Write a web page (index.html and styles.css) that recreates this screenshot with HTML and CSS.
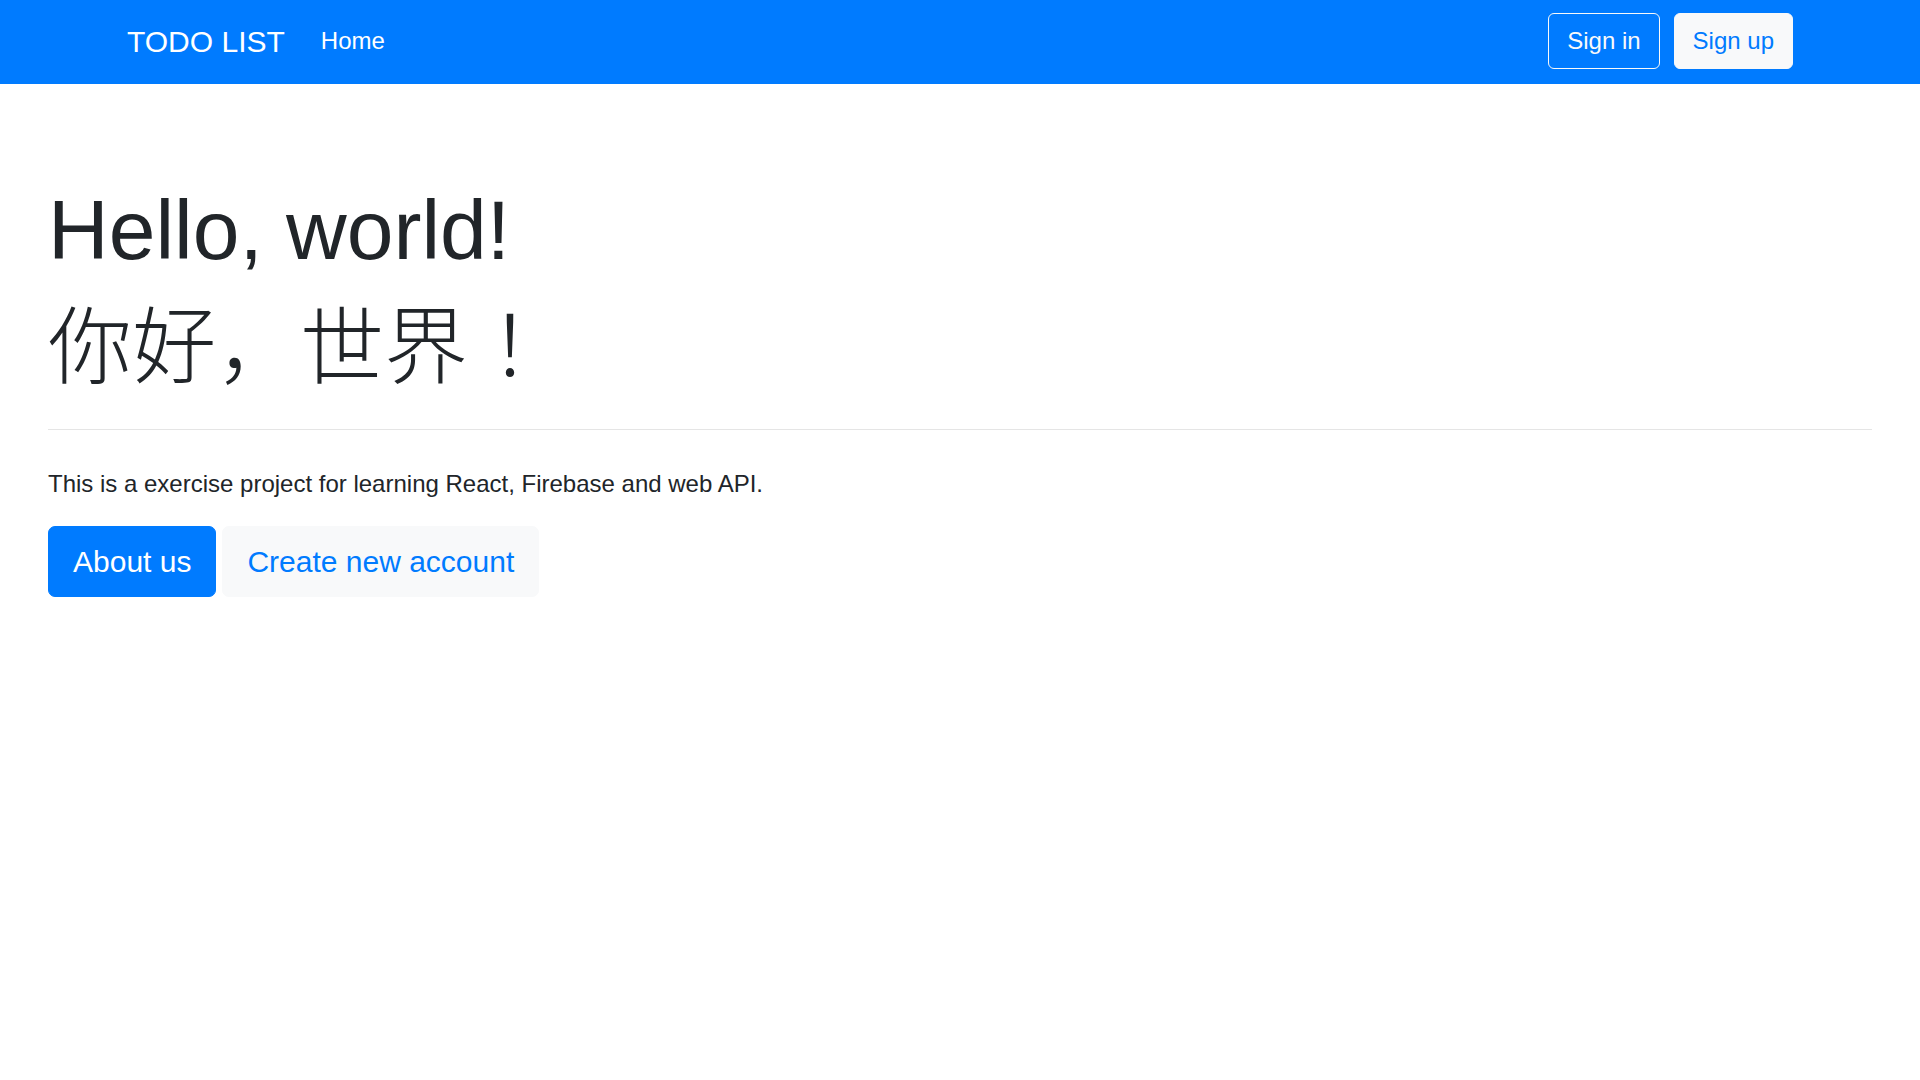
FILE: index.html
```html
<!DOCTYPE html>
<html lang="en">
<head>
<meta charset="utf-8">
<title>TODO LIST</title>
<link rel="stylesheet" href="styles.css">
</head>
<body>
<nav class="navbar">
  <div class="container">
    <a class="brand" href="#">TODO LIST</a>
    <a class="nav-link" href="#">Home</a>
    <div class="nav-actions">
      <button class="btn btn-outline-light">Sign in</button>
      <button class="btn btn-light">Sign up</button>
    </div>
  </div>
</nav>
<main class="jumbotron">
  <h1 class="display">Hello, world!<span class="display-cjk">你好，世界！</span></h1>
  <hr class="divider">
  <p class="intro">This is a exercise project for learning React, Firebase and web API.</p>
  <div class="actions">
    <a class="btn btn-lg btn-primary" href="#">About us</a>
    <a class="btn btn-lg btn-light" href="#">Create new account</a>
  </div>
</main>
</body>
</html>
```

FILE: styles.css
```css
* { box-sizing: border-box; }
html, body { margin: 0; padding: 0; }
body {
  font-family: "Liberation Sans", Arial, "Noto Sans CJK JP", sans-serif;
  font-size: 24px;
  line-height: 1.5;
  color: #212529;
  background: #fff;
}
.navbar {
  background: #007bff;
  padding: 11px 0 13px;
}
.container {
  width: 1666px;
  margin: 0 auto;
  display: flex;
  align-items: center;
}
.brand {
  color: #fff;
  text-decoration: none;
  font-size: 30px;
  line-height: 45px;
  padding: 7.5px 0;
  margin-right: 24px;
}
.nav-link {
  color: #fff;
  text-decoration: none;
  padding: 12px;
  line-height: 36px;
}
.nav-actions {
  margin-left: auto;
  display: flex;
  gap: 14px;
}
.btn {
  display: inline-block;
  font-family: inherit;
  font-size: 24px;
  line-height: 36px;
  padding: 9px 18px;
  border: 1.5px solid transparent;
  border-radius: 6px;
  text-decoration: none;
  cursor: pointer;
  background: transparent;
}
.btn-outline-light {
  color: #f8f9fa;
  border-color: #f8f9fa;
}
.btn-light {
  color: #007bff;
  background: #f8f9fa;
  border-color: #f8f9fa;
}
.btn-primary {
  color: #fff;
  background: #007bff;
  border-color: #007bff;
}
.btn-lg {
  font-size: 30px;
  line-height: 45px;
  padding: 12px 24px;
  border-radius: 7px;
}
.jumbotron {
  padding: 96px 48px;
}
.display {
  margin: 0 0 12px;
  font-size: 84px;
  font-weight: 300;
  line-height: 1.2;
}
.display-cjk {
  display: block;
  font-family: "Noto Sans CJK JP", "Noto Sans CJK SC", sans-serif;
  padding-top: 8px;
  line-height: 104px;
}
.divider {
  margin: 36px 0;
  border: 0;
  border-top: 1.5px solid rgba(0, 0, 0, 0.1);
}
.intro {
  margin: 0 0 24px;
}
.actions {
  display: flex;
  gap: 6px;
}
```
